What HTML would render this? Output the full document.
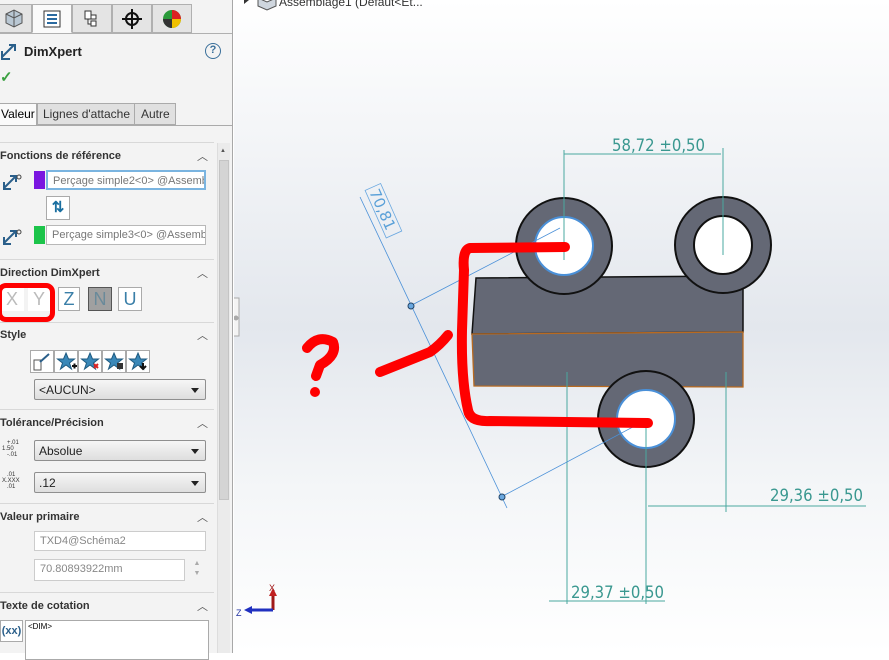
<!DOCTYPE html>
<html><head><meta charset="utf-8"><style>
*{box-sizing:border-box;margin:0;padding:0}
body{width:889px;height:653px;overflow:hidden;position:relative;font-family:"Liberation Sans",sans-serif;font-size:12px;background:#fff}
.a{position:absolute}
#panel{left:0;top:0;width:233px;height:653px;background:#f3f3f3;border-right:1px solid #a8a8a8}
.tab{position:absolute;top:4px;height:29px;border:1px solid #b0b0b0;background:#e4e4e4}
.h{position:absolute;left:0;font-weight:bold;font-size:11px;color:#333}
.car{position:absolute;left:197px;font-size:11px;color:#555}
.sep{position:absolute;left:0;width:214px;height:1px;background:#d8d8d8}
.fld{position:absolute;background:#fff;border:1px solid #b8b8b8;font-size:11px;color:#777;padding:3px 0 0 5px;white-space:nowrap;overflow:hidden}
.dd{position:absolute;left:34px;width:172px;height:21px;border:1px solid #8f8f8f;border-radius:2px;background:linear-gradient(#f6f6f6,#dedede);font-size:12px;color:#222;padding:3px 0 0 4px}
.dd:after{content:"";position:absolute;right:6px;top:8px;border:4px solid transparent;border-top:5px solid #222}
.btn{position:absolute;top:287px;height:24px;border:1px solid #aaa;background:#fff;font-size:18px;text-align:center;line-height:22px;color:#3a7fa8}
</style></head><body>
<div id="panel" class="a">
 <div class="a" style="left:0;top:33px;width:232px;height:1px;background:#b0b0b0"></div>
 <div class="tab" style="left:-2px;width:34px"></div>
 <div class="tab" style="left:32px;width:40px;background:#fafafa;border-bottom:1px solid #fafafa"></div>
 <div class="tab" style="left:72px;width:40px"></div>
 <div class="tab" style="left:112px;width:40px"></div>
 <div class="tab" style="left:152px;width:40px"></div>
 <svg class="a" style="left:0;top:4px" width="195" height="29">
  <path d="M6 10l8-4 8 4v9l-8 4-8-4z" fill="#b9c7d3" stroke="#555"/><path d="M14 6v17M6 10l8 4 8-4" fill="none" stroke="#555"/>
  <rect x="44" y="7" width="16" height="16" fill="#fff" stroke="#333"/><path d="M47 11h10M47 15h10M47 19h10" stroke="#2a6aa0" stroke-width="2"/>
  <path d="M85 7h6v8h-6zM91 11h5v4h-5zM91 17h5v5h-5zM88 15v5h3" fill="#fff" stroke="#333"/>
  <circle cx="132" cy="15" r="6" fill="none" stroke="#111" stroke-width="2"/><path d="M122 15h20M132 5v20" stroke="#111" stroke-width="2"/>
  <circle cx="172" cy="15" r="9" fill="#2a9a3a"/><path d="M172 15V6a9 9 0 0 1 9 9z" fill="#d22"/><path d="M172 15h9a9 9 0 0 1-9 9z" fill="#f0c000"/><path d="M172 15v9a9 9 0 0 1-9-9z" fill="#333"/>
 </svg>
 <svg class="a" style="left:0;top:41px" width="24" height="20"><path d="M2 16l12-12M9 4h6v6M2 10v8h8" fill="none" stroke="#2a5f8a" stroke-width="2"/></svg>
 <div class="a" style="left:24px;top:44px;font-weight:bold;font-size:13px;color:#222">DimXpert</div>
 <div class="a" style="left:205px;top:43px;width:16px;height:16px;border:1.5px solid #3a6f9a;border-radius:50%;text-align:center;font-size:11px;font-weight:bold;color:#3a6f9a;line-height:13px">?</div>
 <div class="a" style="left:0;top:68px;color:#3aa040;font-size:15px;font-weight:bold">✓</div>
 <div class="a" style="left:-2px;top:103px;width:39px;height:23px;background:#fafafa;border:1px solid #aaa;border-bottom:none;font-size:12px;padding:3px 0 0 2px">Valeur</div>
 <div class="a" style="left:37px;top:103px;width:98px;height:22px;background:#e0e0e0;border:1px solid #aaa;font-size:12px;padding:3px 0 0 5px;color:#333">Lignes d'attache</div>
 <div class="a" style="left:134px;top:103px;width:42px;height:22px;background:#e0e0e0;border:1px solid #aaa;font-size:12px;padding:3px 0 0 6px;color:#333">Autre</div>
 <div class="a" style="left:0;top:125px;width:232px;height:1px;background:#aaa"></div>
 <div class="sep" style="top:142px"></div>
 <div class="h" style="top:150px">Fonctions de référence</div><div class="car" style="top:148px">︿</div>
 <div class="a" style="left:34px;top:171px;width:11px;height:18px;background:#7a16e0"></div>
 <div class="fld" style="left:46px;top:170px;width:160px;height:20px;border:2px solid #7ab4e0">Perçage simple2&lt;0&gt; @Assemb</div>
 <div class="a" style="left:46px;top:196px;width:24px;height:24px;border:1px solid #aaa;background:#fff;color:#1a6fa0;font-weight:bold;font-size:15px;text-align:center;line-height:22px">⇅</div>
 <div class="a" style="left:34px;top:226px;width:11px;height:18px;background:#1cc44a"></div>
 <div class="fld" style="left:46px;top:225px;width:160px;height:20px">Perçage simple3&lt;0&gt; @Assemb</div>
 <svg class="a" style="left:2px;top:172px" width="22" height="20"><path d="M2 16l12-12M8 4h6v6M2 10v7h7" fill="none" stroke="#2a5f8a" stroke-width="2"/><circle cx="17" cy="5" r="2" fill="none" stroke="#444"/></svg>
 <svg class="a" style="left:2px;top:227px" width="22" height="20"><path d="M2 16l12-12M8 4h6v6M2 10v7h7" fill="none" stroke="#2a5f8a" stroke-width="2"/><circle cx="17" cy="5" r="2" fill="none" stroke="#444"/></svg>
 <div class="sep" style="top:259px"></div>
 <div class="h" style="top:267px">Direction DimXpert</div><div class="car" style="top:265px">︿</div>
 <div class="btn" style="left:0;width:24px;color:#bbb;border-color:#fff">X</div>
 <div class="btn" style="left:28px;width:22px;color:#bbb;border-color:#fff">Y</div>
 <div class="a" style="left:-3px;top:283px;width:58px;height:39px;border:5px solid #f00;border-radius:9px"></div>
 <div class="btn" style="left:58px;width:22px">Z</div>
 <div class="btn" style="left:88px;width:24px;background:#a0a0a0;border-color:#555;color:#6a8a9a">N</div>
 <div class="btn" style="left:118px;width:24px">U</div>
 <div class="sep" style="top:322px"></div>
 <div class="h" style="top:329px">Style</div><div class="car" style="top:327px">︿</div>
 <svg class="a" style="left:30px;top:350px" width="120" height="23">
  <g stroke="#aaa" fill="#fff"><rect x="0.5" y="0.5" width="23" height="22"/><rect x="24.5" y="0.5" width="23" height="22"/><rect x="48.5" y="0.5" width="23" height="22"/><rect x="72.5" y="0.5" width="23" height="22"/><rect x="96.5" y="0.5" width="23" height="22"/></g>
  <path d="M4 10h7v10H4z" fill="#fff" stroke="#555"/><path d="M10 12l9-8" stroke="#2a5f8a" stroke-width="2"/>
  <g fill="#3a88b8" stroke="#1e5a80"><path d="M36 3l2.5 6h6l-5 4 2 6-5.5-4-5.5 4 2-6-5-4h6z"/><path d="M60 3l2.5 6h6l-5 4 2 6-5.5-4-5.5 4 2-6-5-4h6z"/><path d="M84 3l2.5 6h6l-5 4 2 6-5.5-4-5.5 4 2-6-5-4h6z"/><path d="M108 3l2.5 6h6l-5 4 2 6-5.5-4-5.5 4 2-6-5-4h6z"/></g>
  <path d="M42 16h5M44.5 13.5v5" stroke="#111" stroke-width="2"/><path d="M64 14l4 4M68 14l-4 4" stroke="#d22" stroke-width="2"/><rect x="87" y="13" width="6" height="6" fill="#333"/><path d="M113 13v6M110 16l3 3 3-3" stroke="#111" stroke-width="2" fill="none"/>
 </svg>
 <div class="dd" style="top:379px">&lt;AUCUN&gt;</div>
 <div class="sep" style="top:409px"></div>
 <div class="h" style="top:417px">Tolérance/Précision</div><div class="car" style="top:415px">︿</div>
 <div class="a" style="left:2px;top:440px;font-size:6px;line-height:6px;color:#333">&nbsp;&nbsp;&nbsp;+.01<br>1.50<br>&nbsp;&nbsp;&nbsp;-.01</div>
 <div class="dd" style="top:440px">Absolue</div>
 <div class="a" style="left:2px;top:472px;font-size:6px;line-height:6px;color:#333">&nbsp;&nbsp;&nbsp;.01<br>X.XXX<br>&nbsp;&nbsp;&nbsp;.01</div>
 <div class="dd" style="top:472px">.12</div>
 <div class="sep" style="top:503px"></div>
 <div class="h" style="top:511px">Valeur primaire</div><div class="car" style="top:509px">︿</div>
 <div class="fld" style="left:34px;top:531px;width:172px;height:20px;border-color:#ccc;color:#888">TXD4@Schéma2</div>
 <div class="fld" style="left:34px;top:559px;width:151px;height:22px;border-color:#ccc;color:#888">70.80893922mm</div>
 <div class="a" style="left:188px;top:559px;width:18px;height:22px;color:#aaa;font-size:7px;text-align:center;line-height:10px">▲<br>▼</div>
 <div class="sep" style="top:592px"></div>
 <div class="h" style="top:600px">Texte de cotation</div><div class="car" style="top:598px">︿</div>
 <div class="a" style="left:0;top:620px;width:23px;height:22px;border:1px solid #aaa;background:#fff;font-size:11px;font-weight:bold;color:#2a5f8a;text-align:center;line-height:20px">(xx)</div>
 <div class="a" style="left:25px;top:620px;width:184px;height:40px;border:1px solid #aaa;background:#fff;font-size:8px;padding:1px 2px">&lt;DIM&gt;</div>
 <div class="a" style="left:217px;top:143px;width:13px;height:510px;background:#ebebeb;border-left:1px solid #ddd"></div>
 <div class="a" style="left:219px;top:160px;width:10px;height:340px;background:#d4d4d4;border:1px solid #c4c4c4"></div>
 <div class="a" style="left:220px;top:148px;font-size:6px;color:#555">▲</div>
</div>
<svg class="a" style="left:234px;top:0" width="655" height="653">
 <defs><linearGradient id="g" x1="0" y1="0" x2="0" y2="1"><stop offset="0" stop-color="#fff"/><stop offset="0.5" stop-color="#e3e7ed"/><stop offset="0.75" stop-color="#f4f6f8"/><stop offset="1" stop-color="#fff"/></linearGradient></defs>
 <rect width="655" height="653" fill="url(#g)"/>
 <rect x="-1" y="298" width="6" height="38" fill="#f4f4f4" stroke="#aaa"/><circle cx="2" cy="318" r="2.5" fill="#aaa"/>
 <path d="M10 0l5 4-5 4" fill="#333" transform="translate(0,-4)"/>
 <path d="M24 -2l9 4 9-4v8l-9 4-9-4z" fill="#cfd6de" stroke="#555"/>
 <text x="45" y="6" font-size="12" fill="#333">Assemblage1 (Défaut&lt;Et...</text>
 <g transform="translate(-234,0)">
  <path d="M476 278L743 276V332L472 334Z" fill="#646875" stroke="#111" stroke-width="1.5"/>
  <path d="M472 334L743 332V387L474 386Z" fill="#646875" stroke="#b86a20" stroke-width="1.3"/>
  <circle cx="564" cy="246" r="48" fill="#646875" stroke="#111" stroke-width="2"/>
  <circle cx="564" cy="246" r="29" fill="#fff" stroke="#4a90d8" stroke-width="2"/>
  <circle cx="723" cy="245" r="48" fill="#646875" stroke="#111" stroke-width="2"/>
  <circle cx="723" cy="245" r="29" fill="#fff" stroke="#111" stroke-width="2"/>
  <circle cx="646" cy="419" r="48" fill="#646875" stroke="#111" stroke-width="2"/>
  <circle cx="646" cy="419" r="29" fill="#fff" stroke="#4a90d8" stroke-width="2"/>
  <g stroke="#4aa8a0" stroke-width="1" fill="none">
   <path d="M564 150V260M723 148V255M564 154H721M567 372V604M726 372V512M646 420V604M648 506H866M549 601H665"/>
  </g>
  <g fill="#3a9890" font-size="17" font-family="'DejaVu Sans',sans-serif">
   <text x="612" y="151" textLength="93" lengthAdjust="spacingAndGlyphs">58,72 ±0,50</text><text x="770" y="501" textLength="93" lengthAdjust="spacingAndGlyphs">29,36 ±0,50</text><text x="571" y="598" textLength="93" lengthAdjust="spacingAndGlyphs">29,37 ±0,50</text>
  </g>
  <g stroke="#4a90d8" stroke-width="0.8" fill="none">
   <path d="M360 197L507 508M410 306L560 228M501 497L646 420"/>
  </g>
  <circle cx="411" cy="306" r="3" fill="#6aa8e0" stroke="#246"/><circle cx="502" cy="497" r="3" fill="#6aa8e0" stroke="#246"/>
  <g transform="translate(366,190) rotate(66)"><rect x="0" y="-16" width="52" height="17" fill="none" stroke="#6aa8e0" stroke-width="0.8"/><text x="3" y="-2" font-size="15" fill="#5aa0d8" font-family="'DejaVu Sans',sans-serif">70,81</text></g>
  <g stroke="#f00" stroke-width="10" stroke-linecap="round" stroke-linejoin="round" fill="none">
   <path d="M565 247L470 248Q462 250 464 270L462 330Q461 380 468 410Q470 422 490 421L648 423"/>
   <path d="M380 372Q420 356 430 352Q440 345 448 335"/>
   <path d="M307 348Q318 334 333 342Q338 355 320 365L316 376"/>
  </g>
  <circle cx="315" cy="392" r="5" fill="#f00"/>
  <path d="M273 610V594" stroke="#a01818" stroke-width="3"/><path d="M269 596l4-8 4 8z" fill="#c02020"/>
  <path d="M273 610H250" stroke="#2030c0" stroke-width="3"/><path d="M252 606l-8 4 8 4z" fill="#2030c0"/>
  <text x="269" y="591" font-size="9" fill="#a01818">X</text><text x="236" y="616" font-size="9" fill="#2030a0">Z</text>
 </g>
</svg>
</body></html>
